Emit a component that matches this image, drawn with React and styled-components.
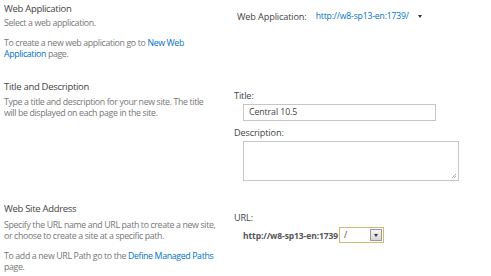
import React from 'react';
import styled, { createGlobalStyle } from 'styled-components';

const GlobalStyle = createGlobalStyle`
  html, body {
    margin: 0;
    padding: 0;
    background: #fff;
  }
  body {
    font-family: 'Open Sans', 'Noto Sans', sans-serif;
    color: #444;
  }
`;

const Page = styled.div`
  width: 491px;
  height: 276px;
  overflow: hidden;
  padding: 2px 0 0 4px;
  box-sizing: border-box;
`;

const Section = styled.div`
  display: grid;
  grid-template-columns: 230px 1fr;
  padding-bottom: ${p => p.gap || 20}px;
`;

const Heading = styled.div`
  font-size: 9.5px;
  letter-spacing: -0.3px;
  line-height: 14px;
  color: #444;
  white-space: nowrap;
`;

const Desc = styled.div`
  font-size: 8.8px;
  letter-spacing: -0.36px;
  line-height: 11px;
  color: #777;
  margin-top: ${p => p.top || 1}px;
  white-space: nowrap;
`;

const Link = styled.a`
  color: #0072c6;
  text-decoration: none;
  font-size: ${p => p.size || 'inherit'};
`;

const Field = styled.div`
  padding-top: ${p => p.top || 10}px;
  display: flex;
  flex-direction: column;
`;

const Label = styled.div`
  font-size: 9.2px;
  letter-spacing: -0.15px;
  line-height: 11px;
  color: #444;
  white-space: nowrap;
  margin-top: ${p => p.top || 0}px;
`;

const PickerRow = styled.div`
  display: flex;
  align-items: center;
  gap: 9px;
  padding-left: 3px;
  font-size: 9.2px;
  letter-spacing: -0.15px;
  line-height: 11px;
`;

const Caret = styled.span`
  width: 0;
  height: 0;
  border-left: 2.5px solid transparent;
  border-right: 2.5px solid transparent;
  border-top: 3px solid #333;
`;

const TextInput = styled.div`
  margin: 3px 0 0 9px;
  width: ${p => p.w}px;
  height: ${p => p.h}px;
  border: 1px solid #c6c6c6;
  box-sizing: border-box;
  font-size: 8.8px;
  letter-spacing: -0.1px;
  line-height: ${p => p.h - 2}px;
  padding-left: 5px;
  color: #444;
  position: relative;
`;

const Grip = styled.svg`
  position: absolute;
  right: 1px;
  bottom: 1px;
`;

const UrlRow = styled.div`
  display: flex;
  align-items: center;
  margin: 4px 0 0 9px;
  gap: 1px;
`;

const UrlBase = styled.span`
  font-size: 8.5px;
  letter-spacing: -0.1px;
  font-weight: bold;
  color: #555;
`;

const Select = styled.div`
  width: 45px;
  height: 16px;
  box-sizing: border-box;
  border: 1px solid #d4b871;
  display: flex;
  align-items: center;
  justify-content: space-between;
  padding: 0 1px 0 4px;
  font-size: 8.8px;
  color: #444;
`;

const SelectButton = styled.div`
  width: 12px;
  height: 12px;
  box-sizing: border-box;
  border: 1px solid #9a9a9a;
  background: linear-gradient(#f4f4f4, #d6d6d6);
  display: flex;
  align-items: center;
  justify-content: center;
`;

export default function App() {
  return (
    <Page>
      <GlobalStyle />
      <Section gap={20}>
        <div>
          <Heading>Web Application</Heading>
          <Desc top={2}>Select a web application.</Desc>
          <Desc top={9}>
            To create a new web application go to <Link>New Web</Link>
            <br />
            <Link>Application</Link> page.
          </Desc>
        </div>
        <Field top={9}>
          <PickerRow>
            <span>Web Application:</span>
            <Link as="span" size="8.6px">http://w8-sp13-en:1739/</Link>
            <Caret />
          </PickerRow>
        </Field>
      </Section>
      <Section gap={21}>
        <div>
          <Heading>Title and Description</Heading>
          <Desc top={3}>
            Type a title and description for your new site. The title
            <br />
            will be displayed on each page in the site.
          </Desc>
        </div>
        <Field>
          <Label>Title:</Label>
          <TextInput w={193} h={17}>Central 10.5</TextInput>
          <Label top={6}>Description:</Label>
          <TextInput w={216} h={40}>
            <Grip width="6" height="6" viewBox="0 0 6 6">
              <path d="M5 1L1 5M5 3L3 5" stroke="#999" strokeWidth="0.8" />
            </Grip>
          </TextInput>
        </Field>
      </Section>
      <Section>
        <div>
          <Heading>Web Site Address</Heading>
          <Desc top={4}>
            Specify the URL name and URL path to create a new site,
            <br />
            or choose to create a site at a specific path.
          </Desc>
          <Desc top={9}>
            To add a new URL Path go to the <Link>Define Managed Paths</Link>
            <br />
            page.
          </Desc>
        </div>
        <Field>
          <Label>URL:</Label>
          <UrlRow>
            <UrlBase>http://w8-sp13-en:1739</UrlBase>
            <Select>
              <span>/</span>
              <SelectButton>
                <Caret />
              </SelectButton>
            </Select>
          </UrlRow>
        </Field>
      </Section>
    </Page>
  );
}
